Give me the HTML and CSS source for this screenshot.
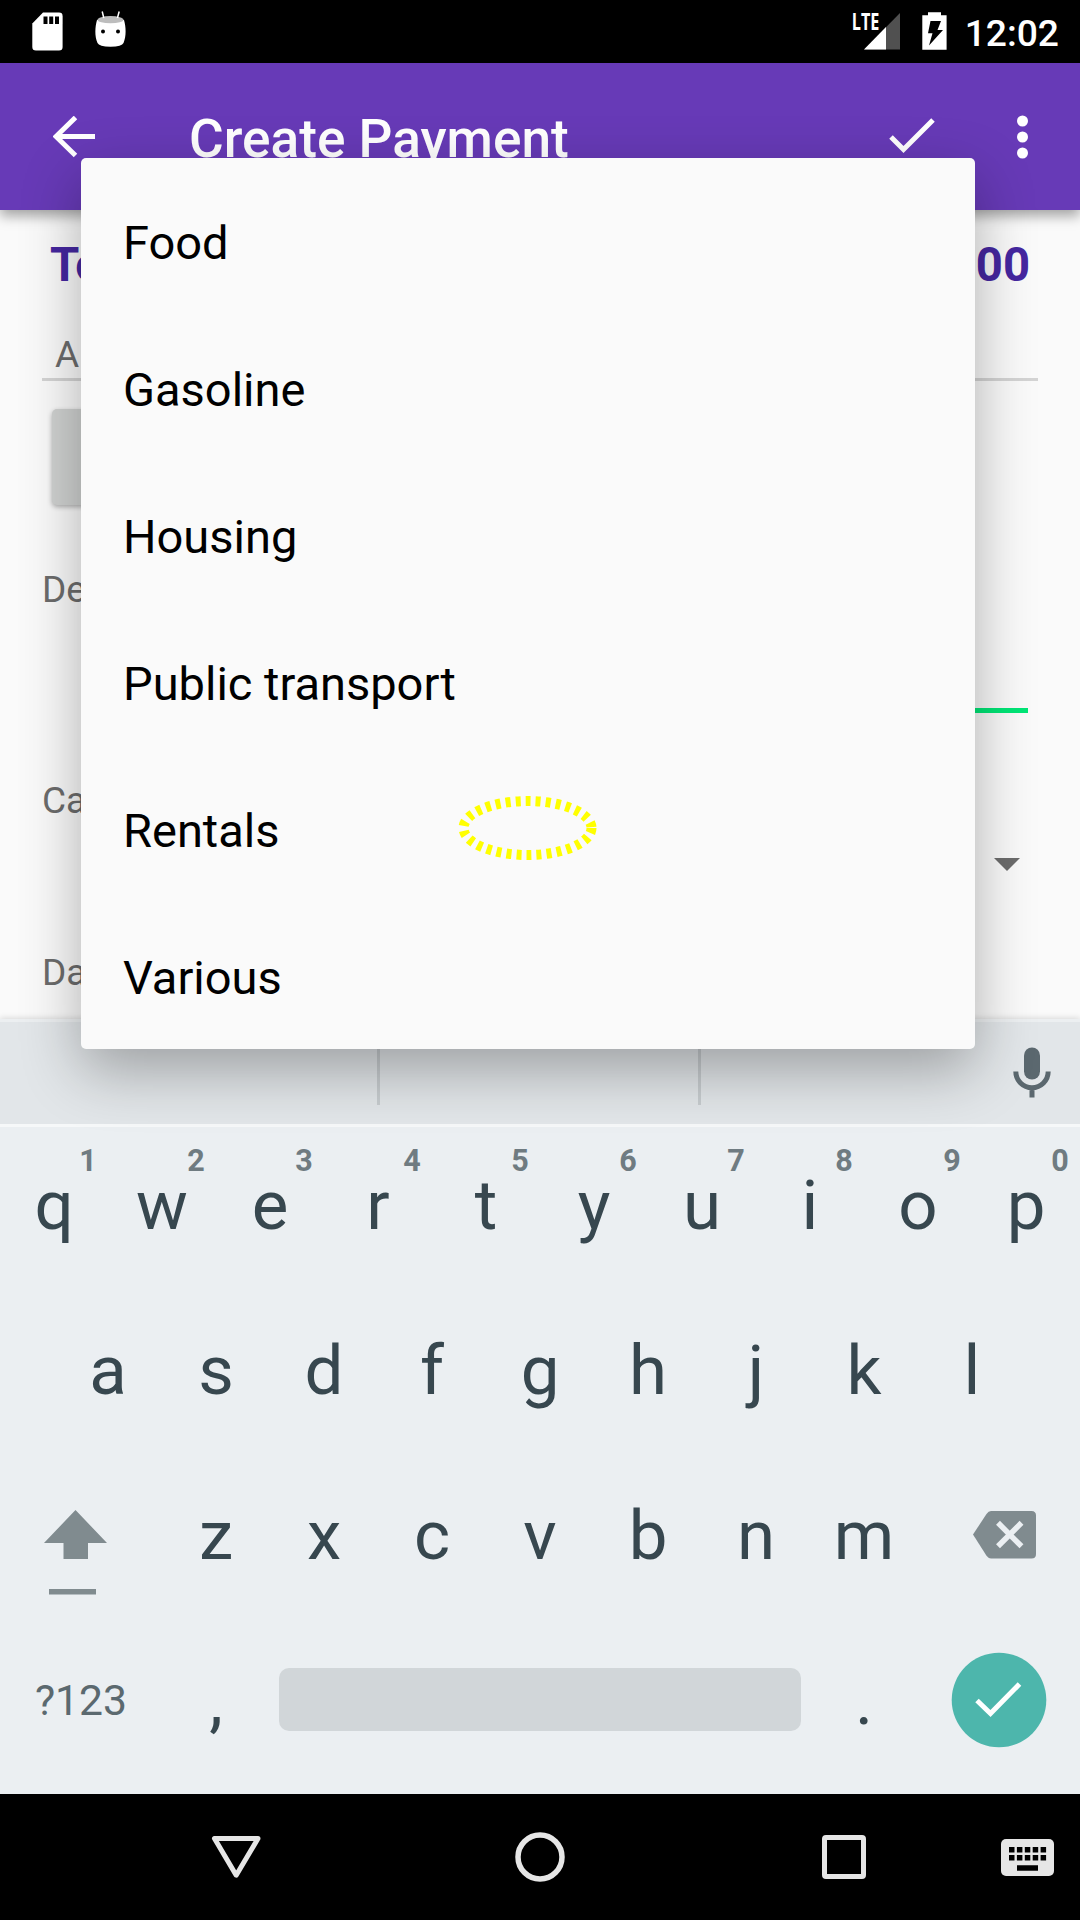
FILE: index.html
```html
<!DOCTYPE html>
<html lang="en">
<head>
<meta charset="utf-8">
<title>Create Payment</title>
<link rel="stylesheet" href="styles.css">
</head>
<body>
<div class="screen">
  <header class="status">
    <svg class="status-left" width="140" height="63" viewBox="0 0 140 63">
      <path fill="#fff" d="M43 12.600H59Q62.600 12.600 62.600 16V47Q62.600 50.500 59 50.500H36Q32.300 50.500 32.300 47V23.500Z"/>
      <path fill="#000" d="M43.500 16.500h4v7.500h-4zM49.200 16.500h4v7.500h-4zM55 16.500h4v7.500h-4z"/>
      <path fill="#fff" d="M97 20H124C126 27 126.500 36 123.500 43Q122 46.700 110.500 46.700T97.500 43C94.500 36 95 27 97 20Z"/>
      <ellipse cx="110.500" cy="19.700" rx="13" ry="3.600" fill="#bdbdbd"/>
      <path d="M102.200 11.500l1.600 6.500M119.200 11.500l-1.800 6.500" stroke="#fff" stroke-width="1.500"/>
      <circle cx="103" cy="31.500" r="2"/><circle cx="118" cy="31.500" r="2"/>
    </svg>
    <div class="status-right">
      <span class="lte">LTE</span>
      <svg width="100" height="63" viewBox="860 0 100 63">
        <path fill="#505050" d="M900 13V49.500H864Z"/>
        <path fill="#fff" d="M886 27V49.500H864Z"/>
        <path fill="#fff" d="M928 12.300h13v3h5.600v34.500H922.300V15.300H928z"/>
        <path fill="#000" d="M930.500 21h10.500l-3.500 9h5.500L929 45.500l3.500-12.200h-4.500z"/>
      </svg>
      <span class="clock">12:02</span>
    </div>
  </header>
  <div class="toolbar">
    <svg class="back" width="42" height="42" viewBox="0 0 42 42"><path d="M22.500 1.500L3 20.500l19.500 19M3 20.500h39" fill="none" stroke="#fff" stroke-width="5"/></svg>
    <h1>Create Payment</h1>
    <svg class="tick" width="46" height="36" viewBox="0 0 46 36"><path d="M2 19L14.500 31.500 44 2" fill="none" stroke="#fff" stroke-width="5"/></svg>
    <svg class="more" width="12" height="44" viewBox="0 0 12 44" fill="#fff"><circle cx="5.500" cy="6" r="5.500"/><circle cx="5.500" cy="22" r="5.500"/><circle cx="5.500" cy="38" r="5.500"/></svg>
  </div>
  <main class="form">
    <div class="total"><span>To</span><span>0.00</span></div>
    <div class="amount">A</div>
    <div class="button"></div>
    <div class="label desc">De</div>
    <div class="accent"></div>
    <div class="label cat">Ca</div>
    <div class="caret"></div>
    <div class="label date">Da</div>
  </main>
  <section class="keyboard">
    <div class="suggest">
      <i></i><i></i>
      <svg width="38" height="52" viewBox="0 0 38 52"><rect x="11" y="0.500" width="16" height="32" rx="8" fill="#5b686f"/><path d="M2.800 24.500a16.200 16.200 0 0 0 32.400 0M19 41v9.500" fill="none" stroke="#5b686f" stroke-width="5"/></svg>
    </div>
    <div class="keys">
      <div class="row">
        <b>q<sup>1</sup></b><b>w<sup>2</sup></b><b>e<sup>3</sup></b><b>r<sup>4</sup></b><b>t<sup>5</sup></b><b>y<sup>6</sup></b><b>u<sup>7</sup></b><b>i<sup>8</sup></b><b>o<sup>9</sup></b><b>p<sup>0</sup></b>
      </div>
      <div class="row"><b>a</b><b>s</b><b>d</b><b>f</b><b>g</b><b>h</b><b>j</b><b>k</b><b>l</b></div>
      <div class="row">
        <svg class="wide" width="162" height="165" viewBox="0 0 162 165" fill="#808b8f"><path d="M75.500 57L107 90H88v16H63.500V90H44zM49 136h47v5.500H49z"/></svg>
        <b>z</b><b>x</b><b>c</b><b>v</b><b>b</b><b>n</b><b>m</b>
        <svg class="wide" width="162" height="165" viewBox="0 0 162 165"><path fill="#808b8f" d="M73 58h40.500q4.500 0 4.500 4.500v38.500q0 4.500-4.500 4.500H73q-2.500 0-4.500-2.800L55 81.500 68.500 61Q70.500 58 73 58z"/><path d="M80 69.800L103.500 93.300M103.500 69.800L80 93.300" stroke="#ebeff2" stroke-width="5.500"/></svg>
      </div>
      <div class="row">
        <span class="sym">?123</span><b>,</b><div class="space"></div><b>.</b>
        <svg class="wide" width="162" height="165" viewBox="0 0 162 165"><circle cx="81" cy="82" r="47.300" fill="#4db6ac"/><path d="M59 82.500L72.500 95.500 101.500 66" fill="none" stroke="#fff" stroke-width="5"/></svg>
      </div>
    </div>
  </section>
  <nav class="nav">
    <svg width="1080" height="126" viewBox="0 1794 1080 126" fill="none" stroke="#e6e6e6" stroke-width="5">
      <path stroke-linejoin="round" d="M214.500 1838.500h43.500L236.200 1875.200z"/>
      <circle cx="540" cy="1857" r="22" stroke-width="5.500"/>
      <rect x="824.500" y="1837.500" width="39" height="39" rx="1.500"/>
      <rect x="1001" y="1839" width="53" height="37" rx="5" fill="#e6e6e6" stroke="none"/>
      <path stroke="#000" stroke-width="5.500" stroke-dasharray="5.500 2.400" d="M1009 1849.700h38M1009 1857.700h38"/>
      <path stroke="#000" stroke-width="5.500" d="M1017 1868h21"/>
    </svg>
  </nav>
  <ul class="menu">
    <li>Food</li><li>Gasoline</li><li>Housing</li><li>Public transport</li><li>Rentals</li><li>Various</li>
  </ul>
  <svg class="marker" width="140" height="66" viewBox="0 0 140 66"><ellipse cx="69.500" cy="33" rx="64" ry="27" fill="none" stroke="#ff0" stroke-width="10" stroke-dasharray="5 5.050"/></svg>
</div>
</body>
</html>
```
FILE: styles.css
```css
* { box-sizing: border-box; margin: 0; padding: 0; }
body { width: 1080px; height: 1920px; overflow: hidden; font-family: Roboto, sans-serif; }
svg { display: block; flex: none; }
.screen { position: relative; display: flex; flex-direction: column; width: 1080px; height: 1920px; overflow: hidden; }

.status { display: flex; justify-content: space-between; height: 63px; background: #000; color: #fff; }
.status-right { display: flex; padding-right: 21px; }
.lte { font: 700 22.5px/43px "Open Sans", sans-serif; transform: scaleX(.72); transform-origin: 100% 50%; margin-right: -20px; z-index: 1; }
.clock { font-weight: 500; font-size: 37.2px; line-height: 66px; margin-left: 5px; }

.toolbar { display: flex; align-items: flex-start; height: 147px; padding: 52px 51px 0 53px; background: #673ab7; color: #fff; z-index: 1; box-shadow: 0 6px 12px rgba(0, 0, 0, .35); }
.back { margin-top: 1px; }
.toolbar h1 { flex: 1; margin: -7px 0 0 94px; font-weight: 500; font-size: 53.2px; line-height: 62px; }
.tick { margin: 3px 82px 0 0; }

.form { display: flex; flex-direction: column; height: 809px; padding: 0 42px; background: #fafafa; color: #6c6c6c; }
.total { display: flex; justify-content: space-between; margin-top: 27px; padding: 0 8px; font-weight: 700; font-size: 47.25px; line-height: 56px; color: #4527a0; }
.amount { height: 64px; margin-top: 24px; padding: 0 13px; border-bottom: 3px solid #d4d4d4; font-size: 37px; line-height: 75px; }
.button { width: 300px; height: 96px; margin: 28px 0 0 10px; border-radius: 5px; background: #d0d2d1; box-shadow: 0 2px 5px rgba(0, 0, 0, .3); }
.label { font-size: 37px; line-height: 44px; }
.desc { margin-top: 63px; }
.accent { height: 5px; margin: 96px 10px 0 60px; background: #00e676; }
.cat { margin-top: 66px; }
.caret { align-self: flex-end; margin: 35px 18px 0 0; border: 13px solid transparent; border-top-color: #6c6c6c; border-bottom: 0; }
.date { margin-top: 80px; }

.keyboard { height: 775px; background: #ebeff2; z-index: 1; box-shadow: 0 -1px 6px rgba(0, 0, 0, .14); }
.suggest { display: flex; height: 108px; padding: 0 29px 0 0; border-top: 3px solid #eceff1; border-bottom: 3px solid #f6f8f9; background: #e2e6e9; }
.suggest i { width: 3px; height: 58px; margin: 25px 0 0 377px; background: #c7cccf; }
.suggest i + i { margin-left: 318px; }
.suggest svg { margin: 25px 0 0 auto; }
.keys { margin-top: -4px; }
.row { display: flex; justify-content: center; height: 165px; color: #37474f; }
.row b { position: relative; width: 108px; font-weight: 400; font-size: 69px; line-height: 165px; text-align: center; }
.row sup { position: absolute; left: 78px; top: 20px; width: 20px; font-weight: 700; font-size: 30.5px; line-height: 36px; color: #6f7b81; }
.sym { width: 162px; text-align: center; font-size: 42.7px; line-height: 165px; color: #5b696f; }
.space { width: 522px; height: 63px; margin: 50px 9px 0; border-radius: 10px; background: #d1d6d9; }

.nav { height: 126px; background: #000; }

/* Category drop-down, floating above the form and the keyboard */
.menu { position: absolute; left: 81px; top: 158px; width: 894px; height: 891px; padding: 11px 42px 0; overflow: hidden; border-radius: 5px; background: #fafafa; box-shadow: 0 21px 60px rgba(0, 0, 0, .31); list-style: none; z-index: 2; }
.menu li { height: 147px; font-size: 47px; line-height: 147px; color: #000; }
.marker { position: absolute; left: 458px; top: 795px; z-index: 3; }
```
